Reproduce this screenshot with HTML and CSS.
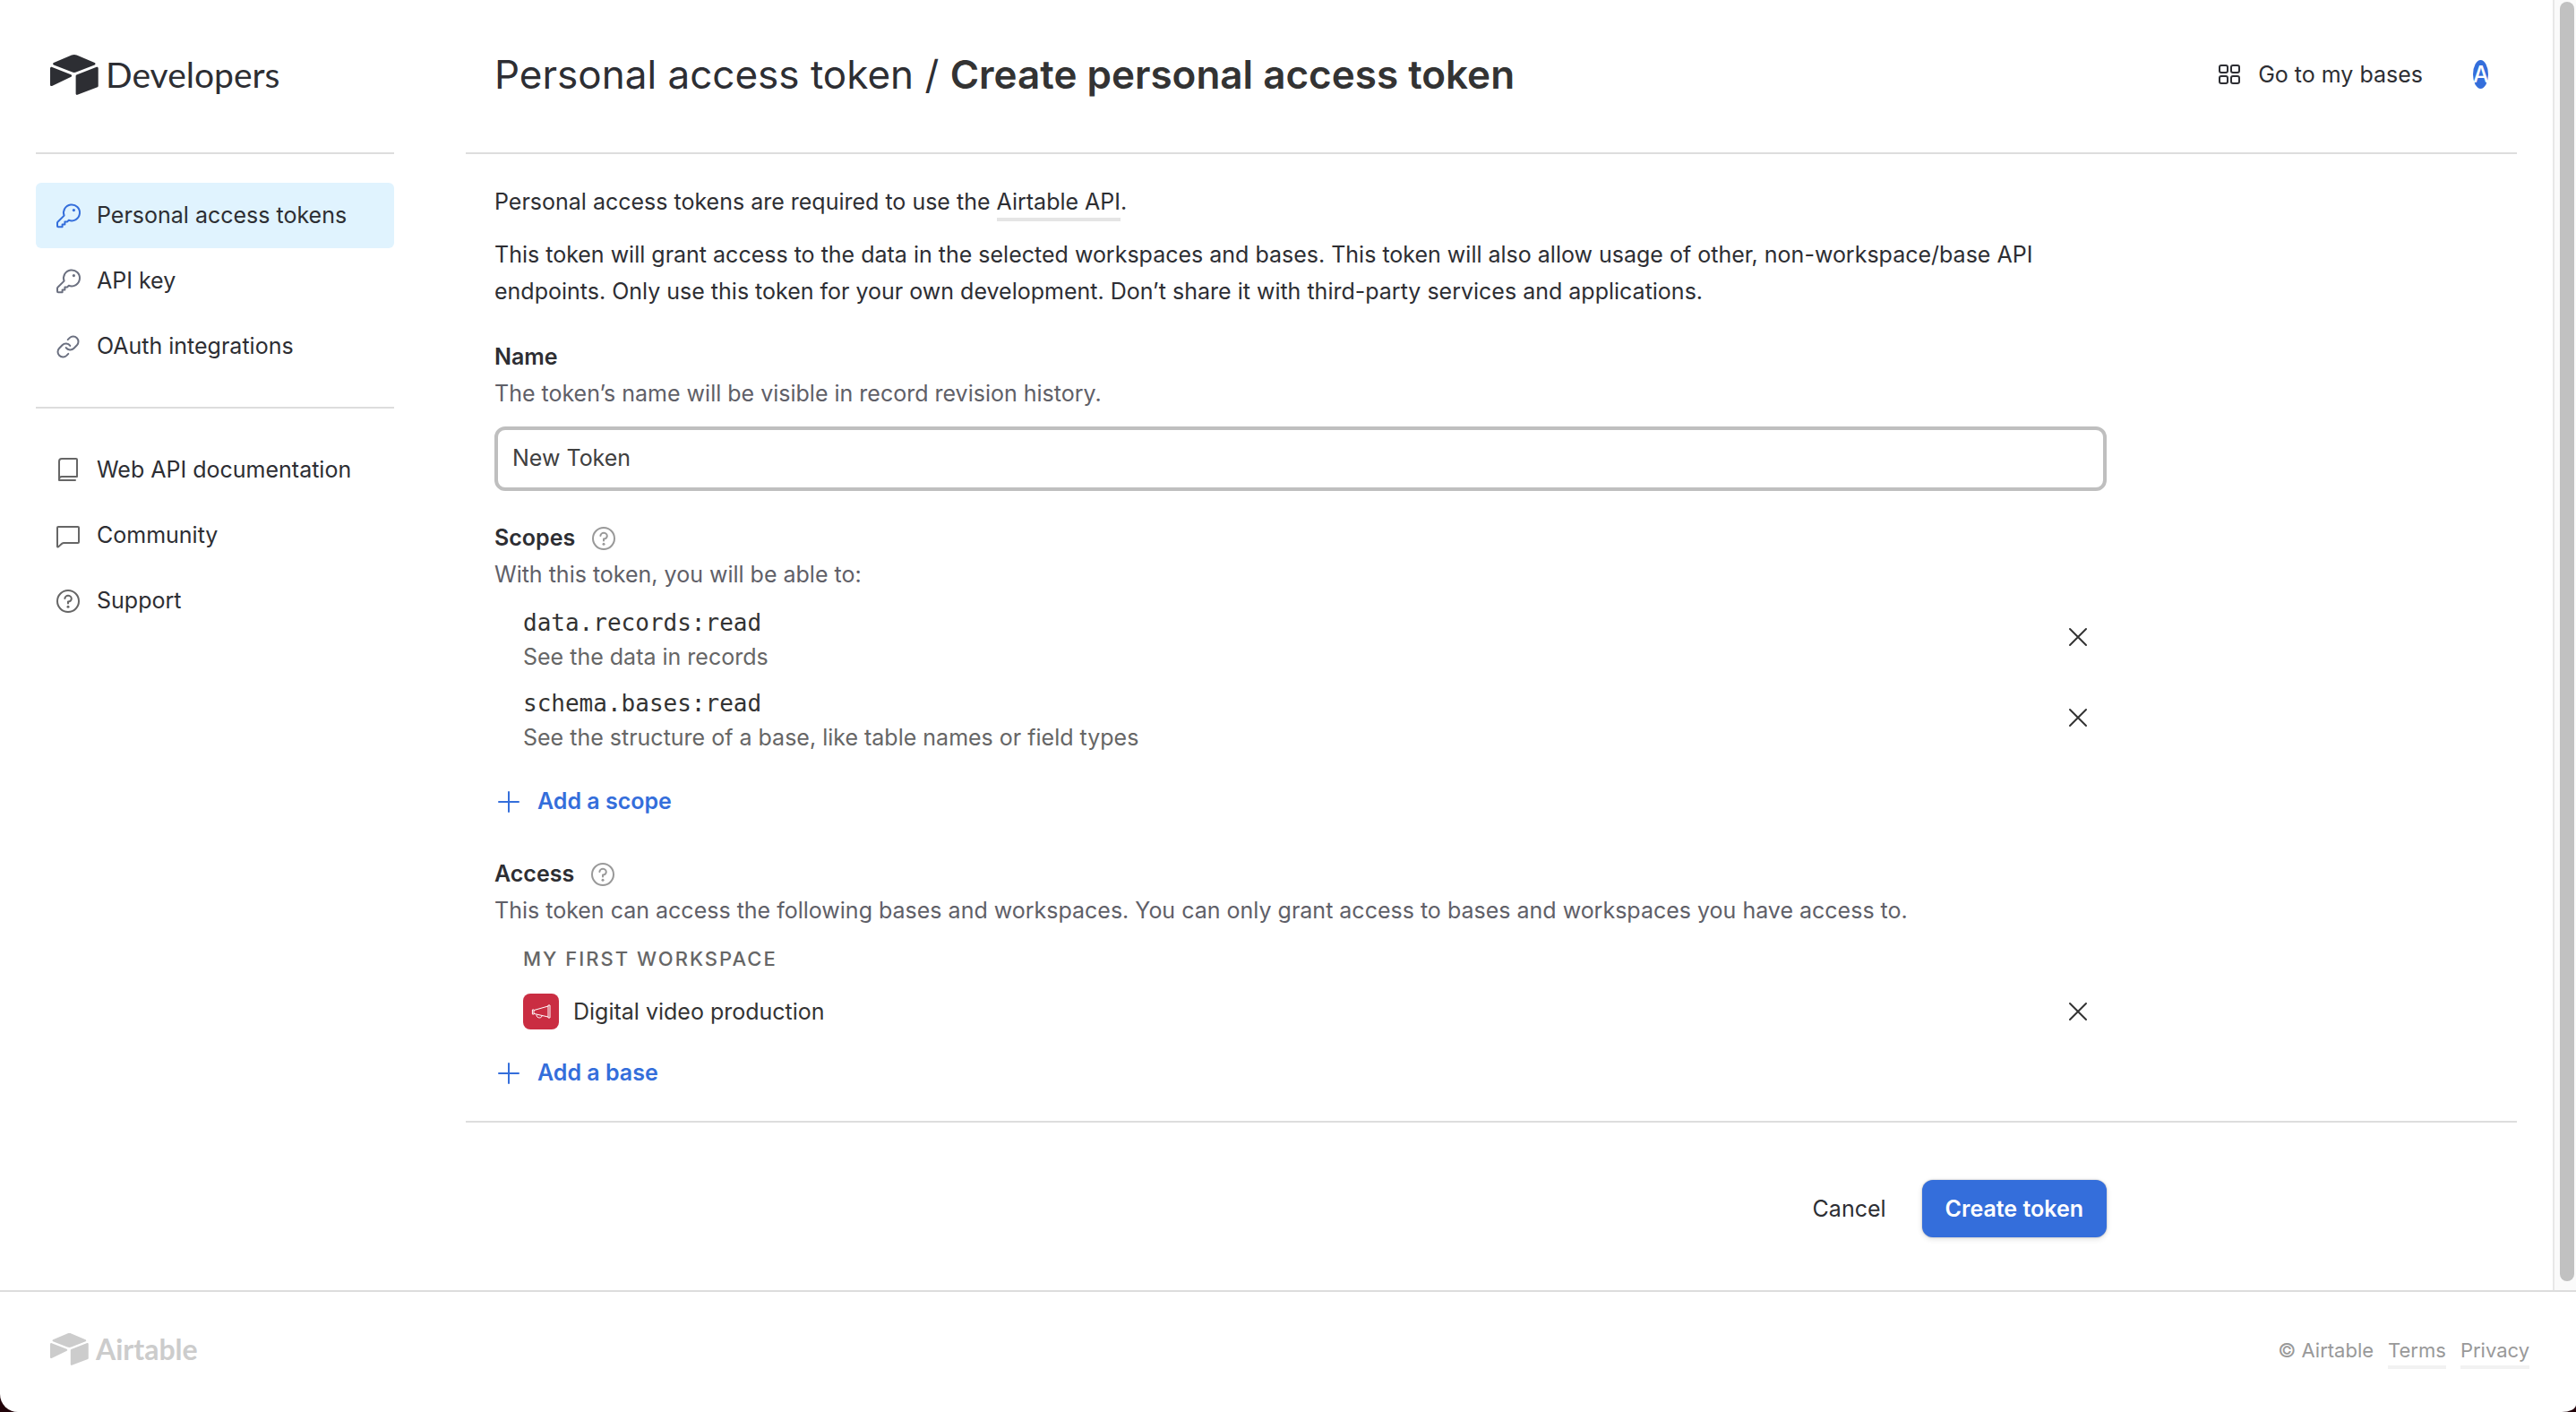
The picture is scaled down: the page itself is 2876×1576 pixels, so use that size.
FILE: index.html
```html
<!DOCTYPE html>
<html lang="en">
<head>
<meta charset="utf-8">
<title>Create personal access token</title>
<link rel="stylesheet" href="styles.css">
</head>
<body>
<svg class="symbols" aria-hidden="true">
  <symbol id="logo" viewBox="11 10 178 149">
    <path d="M90.04 12.37L24.08 39.66C20.41 41.18 20.45 46.39 24.14 47.85L90.38 74.12C96.2 76.43 102.68 76.43 108.5 74.12L174.73 47.85C178.42 46.39 178.46 41.18 174.79 39.66L108.83 12.37C102.82 9.88 96.06 9.88 90.04 12.37"/>
    <path d="M105.31 88.46V154.08C105.31 157.2 108.46 159.33 111.36 158.18L185.17 129.54C186.85 128.87 187.96 127.24 187.96 125.43V59.81C187.96 56.69 184.81 54.55 181.91 55.7L108.1 84.35C106.42 85.02 105.31 86.65 105.31 88.46"/>
    <path d="M88.08 91.85L17.71 125.65C14.78 127.07 11.04 124.93 11.04 121.67V60.09C11.04 58.91 11.64 57.89 12.45 57.13C13.66 56 16.3 55.3 18.5 56.2L87.6 83.6C91.2 85 91.5 90.2 88.08 91.85"/>
  </symbol>
  <symbol id="key" viewBox="0 0 32 32">
    <path d="M11.6 15.6A9 9 0 1 1 16.8 20.8L15 22.6H12.4V25.4H9.6V28.2H5A1 1 0 0 1 4 27.2V23.6A1 1 0 0 1 4.4 22.8Z"/>
    <circle class="dot" cx="22.4" cy="9.6" r="1.6"/>
  </symbol>
  <symbol id="link" viewBox="0 0 32 32">
    <path d="M13.7 17.1a5.8 5.8 0 0 0 8.8.6l3.4-3.4a5.8 5.8 0 0 0-8.2-8.2l-2 2"/>
    <path d="M18.3 14.9a5.8 5.8 0 0 0-8.8-.6l-3.4 3.4a5.8 5.8 0 0 0 8.2 8.2l2-2"/>
  </symbol>
  <symbol id="book" viewBox="0 0 32 32">
    <path d="M6 26V6A3 3 0 0 1 9 3H25A1 1 0 0 1 26 4V23H9A3 3 0 0 0 6 26V27H24"/>
  </symbol>
  <symbol id="chat" viewBox="0 0 32 32">
    <path d="M4 28V7A1 1 0 0 1 5 6H27A1 1 0 0 1 28 7V23A1 1 0 0 1 27 24H11C9.4 24 7.6 26 6 27.6C5.2 28.4 4 29 4 28Z"/>
  </symbol>
  <symbol id="help" viewBox="0 0 32 32">
    <circle cx="16" cy="16" r="12"/>
    <path d="M12.4 13A3.7 3.4 0 1 1 16 16.6V18.4"/>
    <circle class="dot" cx="16" cy="22.2" r="1.5"/>
  </symbol>
  <symbol id="grid" viewBox="0 0 32 32">
    <rect x="5" y="6" width="9" height="8" rx="2"/><rect x="18" y="6" width="9" height="8" rx="2"/>
    <rect x="5" y="18" width="9" height="8" rx="2"/><rect x="18" y="18" width="9" height="8" rx="2"/>
  </symbol>
  <symbol id="plus" viewBox="0 0 32 32"><path d="M5 16H27M16 5V27"/></symbol>
  <symbol id="close" viewBox="0 0 32 32"><path d="M7 7L25 25M25 7L7 25"/></symbol>
  <symbol id="megaphone" viewBox="0 0 40 40">
    <path d="M28 13H30V27H28ZM28 14L12 18.6V22.4L28 26M12 18H10.4V23H12M15 23.6C14.6 27.6 20.6 28 21 25"/>
  </symbol>
</svg>

<div class="window">
  <div class="workspace">
    <aside class="sidebar">
      <a class="brand" href="#">
        <svg class="brand-mark"><use href="#logo"/></svg>
        <span>Developers</span>
      </a>
      <nav class="nav">
        <a class="nav-item selected" href="#"><svg class="icon"><use href="#key"/></svg>Personal access tokens</a>
        <a class="nav-item slate" href="#"><svg class="icon"><use href="#key"/></svg>API key</a>
        <a class="nav-item slate" href="#"><svg class="icon"><use href="#link"/></svg>OAuth integrations</a>
      </nav>
      <nav class="nav">
        <a class="nav-item" href="#"><svg class="icon"><use href="#book"/></svg>Web API documentation</a>
        <a class="nav-item" href="#"><svg class="icon"><use href="#chat"/></svg>Community</a>
        <a class="nav-item" href="#"><svg class="icon"><use href="#help"/></svg>Support</a>
      </nav>
    </aside>

    <main class="main">
      <header class="topbar">
        <h1 class="title"><a href="#">Personal access token</a> / <strong>Create personal access token</strong></h1>
        <div class="account">
          <a class="bases-link" href="#"><svg class="icon"><use href="#grid"/></svg>Go to my bases</a>
          <button class="avatar" type="button">A</button>
        </div>
      </header>

      <form class="form" id="token-form">
        <div class="intro">
          <p>Personal access tokens are required to use the <a class="underlined" href="#">Airtable API</a>.</p>
          <p>This token will grant access to the data in the selected workspaces and bases. This token will also allow usage of other, non-workspace/base API<br>endpoints. Only use this token for your own development. Don’t share it with third-party services and applications.</p>
        </div>

        <section class="field">
          <label class="label" for="token-name">Name</label>
          <p class="hint">The token’s name will be visible in record revision history.</p>
          <input class="text-input" id="token-name" type="text" value="New Token">
        </section>

        <section class="field">
          <h2 class="label">Scopes <svg class="icon help"><use href="#help"/></svg></h2>
          <p class="hint">With this token, you will be able to:</p>
          <ul class="scopes">
            <li class="row">
              <div class="scope"><code>data.records:read</code><p>See the data in records</p></div>
              <button class="remove" type="button" aria-label="Remove data.records:read"><svg class="icon"><use href="#close"/></svg></button>
            </li>
            <li class="row">
              <div class="scope"><code>schema.bases:read</code><p>See the structure of a base, like table names or field types</p></div>
              <button class="remove" type="button" aria-label="Remove schema.bases:read"><svg class="icon"><use href="#close"/></svg></button>
            </li>
          </ul>
          <button class="add add-scope" type="button"><svg class="icon"><use href="#plus"/></svg>Add a scope</button>
        </section>

        <section class="field access">
          <h2 class="label">Access <svg class="icon help"><use href="#help"/></svg></h2>
          <p class="hint">This token can access the following bases and workspaces. You can only grant access to bases and workspaces you have access to.</p>
          <h3 class="workspace-name">My First Workspace</h3>
          <div class="row">
            <div class="base"><svg class="base-icon"><use href="#megaphone"/></svg>Digital video production</div>
            <button class="remove" type="button" aria-label="Remove Digital video production"><svg class="icon"><use href="#close"/></svg></button>
          </div>
          <button class="add add-base" type="button"><svg class="icon"><use href="#plus"/></svg>Add a base</button>
        </section>
      </form>

      <div class="actions">
        <div class="actions-inner">
          <button class="cancel" type="button">Cancel</button>
          <button class="create" type="submit" form="token-form">Create token</button>
        </div>
      </div>
    </main>

    <div class="scrollbar" aria-hidden="true"><div class="thumb"></div></div>
  </div>

  <footer class="footer">
    <a class="footer-brand" href="#"><svg class="footer-mark"><use href="#logo"/></svg><span>Airtable</span></a>
    <div class="legal"><span>© Airtable</span><a href="#">Terms</a><a href="#">Privacy</a></div>
  </footer>
</div>
</body>
</html>
```
FILE: styles.css
```css
* { box-sizing: border-box; }

body {
  margin: 0;
  background: #22040a;
  color: #2d2e33;
  font: 400 25px/41px Inter, "Liberation Sans", sans-serif;
}

a { color: inherit; text-decoration: none; }
p, h1, h2, h3, ul { margin: 0; padding: 0; }
button {
  padding: 0;
  border: 0;
  background: none;
  color: inherit;
  font: inherit;
}

.symbols { position: absolute; width: 0; height: 0; }

.icon {
  flex: none;
  width: 32px;
  height: 32px;
  fill: none;
  stroke: currentColor;
  stroke-width: 2;
  stroke-linecap: round;
  stroke-linejoin: round;
}
.dot { fill: currentColor; stroke: none; }

.window {
  display: flex;
  flex-direction: column;
  min-height: 100vh;
  background: #fff;
  border-radius: 0 0 16px 20px / 0 0 8px 20px;
}
.workspace { flex: 1; display: flex; }

/* Sidebar */
.sidebar { flex: none; width: 440px; padding-left: 40px; }
.brand {
  display: flex;
  align-items: center;
  gap: 8px;
  height: 170px;
  padding: 0 0 4px 16px;
  font: 400 39px/48px Lato, sans-serif;
}
.brand-mark { width: 54px; height: 47px; fill: currentColor; }
.nav { padding: 32px 0 31px; border-top: 2px solid #dddddd; }
.nav-item {
  display: flex;
  align-items: center;
  gap: 16px;
  height: 73px;
  padding-left: 20px;
  border-radius: 6px;
}
.nav-item .icon { color: #666666; }
.nav-item.slate .icon { color: #6b7080; }
.nav-item.selected { background: #e0f3fe; }
.nav-item.selected .icon { color: #346edb; }

/* Main column */
.main { flex: 1; min-width: 0; padding: 0 40px 0 80px; }
.topbar {
  display: flex;
  align-items: center;
  justify-content: space-between;
  height: 172px;
  padding: 0 32px 4px;
  border-bottom: 2px solid #dddddd;
}
.title { font-size: 44px; line-height: 56px; font-weight: 400; }
.title strong { font-weight: 600; color: #333333; }
.account { display: flex; align-items: center; gap: 56px; }
.bases-link { display: flex; align-items: center; gap: 16px; }
.avatar {
  width: 17px;
  height: 32px;
  border-radius: 50%;
  background: #346edb;
  color: #fff;
  font-weight: 500;
  line-height: 32px;
}

.form { max-width: 1832px; padding: 33px 0 33px 32px; }
.intro { display: grid; gap: 18px; margin-bottom: 32px; }
.underlined { padding-bottom: 3px; border-bottom: 4px solid #e5e5e5; }
.field { display: flex; flex-direction: column; margin-bottom: 32px; }
.label {
  display: flex;
  align-items: center;
  gap: 16px;
  font-size: 25px;
  font-weight: 600;
}
.help { color: #999999; }
.hint { color: #5f6068; }
.text-input {
  height: 72px;
  margin-top: 16px;
  padding: 0 16px 3px;
  border: 4px solid #bfbfbf;
  border-radius: 12px;
  outline: 0;
  color: #404040;
  font: inherit;
}

.row {
  display: flex;
  align-items: center;
  justify-content: space-between;
  padding: 0 16px 0 32px;
}
.remove { display: flex; color: #333333; }
.scopes { display: grid; gap: 8px; margin-top: 8px; list-style: none; }
.scope { padding-top: 6px; color: #666666; line-height: 38px; }
.scope code {
  display: block;
  color: #333333;
  font: 26px/38px "DejaVu Sans Mono", monospace;
}

.add {
  display: flex;
  align-items: center;
  gap: 16px;
  align-self: flex-start;
  color: #346edb;
  font-weight: 600;
}
.add-scope { margin: 32px 0 8px; }
.add-base { margin-top: 28px; }

.access { margin-bottom: 0; }
.workspace-name {
  margin: 16px 0 22px;
  padding-left: 32px;
  color: #666666;
  font-size: 22px;
  line-height: 34px;
  font-weight: 500;
  letter-spacing: 2px;
  text-transform: uppercase;
}
.base { display: flex; align-items: center; gap: 16px; height: 40px; color: #333333; }
.base-icon {
  width: 40px;
  height: 40px;
  border-radius: 8px;
  background: #ca2d42;
  fill: none;
  stroke: #fff;
  stroke-linejoin: round;
}

.actions { padding: 64px 0 56px 32px; border-top: 2px solid #dddddd; }
.actions-inner {
  display: flex;
  justify-content: flex-end;
  gap: 40px;
  max-width: 1800px;
}
.create {
  height: 64px;
  padding: 0 26px;
  border-radius: 12px;
  background: #346edb;
  box-shadow: 0 0 2px rgba(0, 0, 0, .3), 0 2px 6px rgba(0, 0, 0, .12);
  color: #fff;
  font-weight: 600;
}

.scrollbar {
  flex: none;
  width: 26px;
  padding: 2px 2px 10px 6px;
  border-left: 2px solid #e8e8e8;
  background: #fafafa;
}
.thumb { height: 100%; border-radius: 8px; background: #c1c1c1; }

/* Footer */
.footer {
  display: flex;
  align-items: center;
  justify-content: space-between;
  height: 136px;
  padding: 0 52px 0 56px;
  border-top: 2px solid #dddddd;
  color: #999999;
  font-size: 22px;
  line-height: 34px;
}
.footer-brand {
  display: flex;
  align-items: center;
  gap: 8px;
  padding-bottom: 6px;
  color: #cccccc;
  font: 700 32px/36px Lato, sans-serif;
}
.footer-mark { width: 43px; height: 36px; fill: currentColor; }
.legal { display: flex; gap: 16px; }
.legal a { border-bottom: 4px solid #f2f2f2; }
```
